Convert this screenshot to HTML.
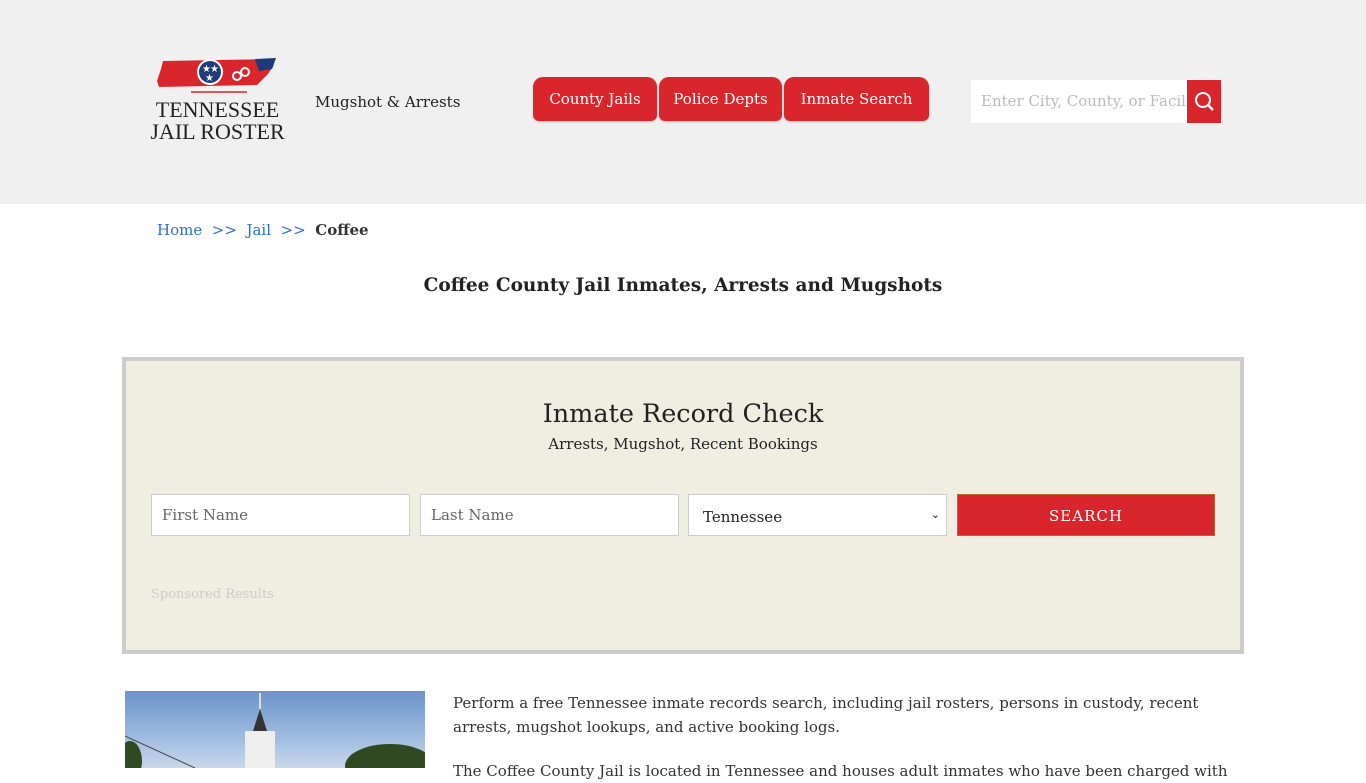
<!DOCTYPE html>
<html><head><meta charset="utf-8"><style>
*{box-sizing:border-box;margin:0;padding:0}
body{width:1366px;height:768px;overflow:hidden;background:#fff;font-family:"DejaVu Serif","Liberation Serif",serif;color:#333}
.hdr{position:absolute;left:0;top:0;width:1366px;height:204px;background:#f0f0f0}
.tag{position:absolute;left:315px;top:93px;font-size:15px;color:#222}
.logo-t{position:absolute;left:150px;top:99px;width:135px;text-align:center;font-family:"Liberation Serif",serif;font-size:22px;line-height:22px;color:#222;white-space:nowrap}
.nav a{position:absolute;top:77px;height:44px;background:#d9252c;color:#fff;font-size:15px;line-height:44px;text-align:center;border-radius:10px 10px 6px 6px;text-decoration:none;box-shadow:0 1px 2px rgba(0,0,0,.2)}
.srch{position:absolute;left:971px;top:80px;width:216px;height:43px;background:#fff;color:#bbb;font-size:15px;line-height:43px;padding-left:10px;white-space:nowrap;overflow:hidden}
.sbtn{position:absolute;left:1187px;top:80px;width:34px;height:43px;background:#d9252c}
.bc{position:absolute;left:157px;top:221px;font-size:15px;color:#333}
.bc a{color:#2a6ed8;text-decoration:none}
h1{position:absolute;left:0;width:1366px;top:275px;text-align:center;font-size:18.5px;font-weight:bold;color:#222}
.box{position:absolute;left:122px;top:357px;width:1122px;height:297px;background:#f0eee0;border:4px solid #ccc}
.box h2{position:absolute;top:38px;width:100%;text-align:center;font-weight:normal;font-size:25.5px;color:#222}
.box .sub{position:absolute;top:74px;width:100%;text-align:center;font-size:15px;color:#222}
.inp{position:absolute;top:133px;height:42px;width:259px;background:#fff;border:1px solid #ccc;font-size:15px;line-height:40px;padding-left:10px;color:#666}
.btn{position:absolute;top:133px;left:831px;width:258px;height:42px;background:#d9252c;border:1px solid #b8662a;color:#fff;text-align:center;line-height:42px;font-size:15px;letter-spacing:1px}
.sp{position:absolute;left:25px;top:226px;font-size:13px;color:#ccc}
.img{position:absolute;left:125px;top:691px;width:300px;height:77px;background:linear-gradient(180deg,#6c93c9 0%,#9fbbe0 60%,#c8d8ea 100%)}
.p{position:absolute;left:453px;font-size:15px;line-height:24px;color:#333;width:780px}
</style></head><body>
<div class="hdr">
<svg style="position:absolute;left:155px;top:57px" width="125" height="40" viewBox="0 0 125 40">
<polygon points="8,4 120,2 118,10 112,18 102,28 4,30 2,24 6,12" fill="#d9252c"/>
<polygon points="100,2 121,1 117,12 104,14" fill="#1e3a78"/>
<circle cx="55" cy="15" r="13" fill="#fff"/><circle cx="55" cy="15" r="11" fill="#1e3a78"/>
<text x="47" y="15" font-size="10" fill="#fff">★</text><text x="55" y="15" font-size="10" fill="#fff">★</text><text x="50" y="24" font-size="10" fill="#fff">★</text>
<circle cx="82" cy="19" r="4" fill="none" stroke="#fff" stroke-width="2"/><circle cx="90" cy="15" r="4" fill="none" stroke="#fff" stroke-width="2"/>
<line x1="36" y1="35" x2="92" y2="35" stroke="#d9252c" stroke-width="1.5"/>
</svg>
<div class="logo-t">TENNESSEE<br>JAIL ROSTER</div>
<div class="tag">Mugshot &amp; Arrests</div>
<div class="nav"><a style="left:533px;width:124px">County Jails</a><a style="left:659px;width:123px">Police Depts</a><a style="left:784px;width:145px">Inmate Search</a></div>
<div class="srch">Enter City, County, or Facility</div>
<div class="sbtn"><svg width="34" height="43" viewBox="0 0 34 43"><circle cx="16" cy="20" r="7" fill="none" stroke="#fff" stroke-width="2"/><line x1="21" y1="25" x2="26" y2="30" stroke="#fff" stroke-width="2.5"/></svg></div>
</div>
<div class="bc"><a>Home</a> &nbsp;<a>&gt;&gt;</a>&nbsp; <a>Jail</a> &nbsp;<a>&gt;&gt;</a>&nbsp; <b>Coffee</b></div>
<h1>Coffee County Jail Inmates, Arrests and Mugshots</h1>
<div class="box">
<h2>Inmate Record Check</h2>
<div class="sub">Arrests, Mugshot, Recent Bookings</div>
<div class="inp" style="left:25px">First Name</div>
<div class="inp" style="left:294px">Last Name</div>
<div class="inp" style="left:562px;color:#222;padding-left:14px;line-height:44px">Tennessee<span style="position:absolute;right:6px;font-size:11px;line-height:40px">⌄</span></div>
<div class="btn">SEARCH</div>
<div class="sp">Sponsored Results</div>
</div>
<div class="img"><svg width="300" height="77"><rect x="120" y="40" width="30" height="37" fill="#eee"/><polygon points="135,18 128,40 142,40" fill="#333"/><line x1="135" y1="18" x2="135" y2="2" stroke="#ddd" stroke-width="2"/><ellipse cx="265" cy="75" rx="45" ry="22" fill="#2f4a22"/><ellipse cx="5" cy="70" rx="12" ry="20" fill="#2f4a22"/><line x1="0" y1="45" x2="70" y2="77" stroke="#444"/></svg></div>
<div class="p" style="top:691px">Perform a free Tennessee inmate records search, including jail rosters, persons in custody, recent arrests, mugshot lookups, and active booking logs.</div>
<div class="p" style="top:759px;white-space:nowrap">The Coffee County Jail is located in Tennessee and houses adult inmates who have been charged with</div>
</body></html>
